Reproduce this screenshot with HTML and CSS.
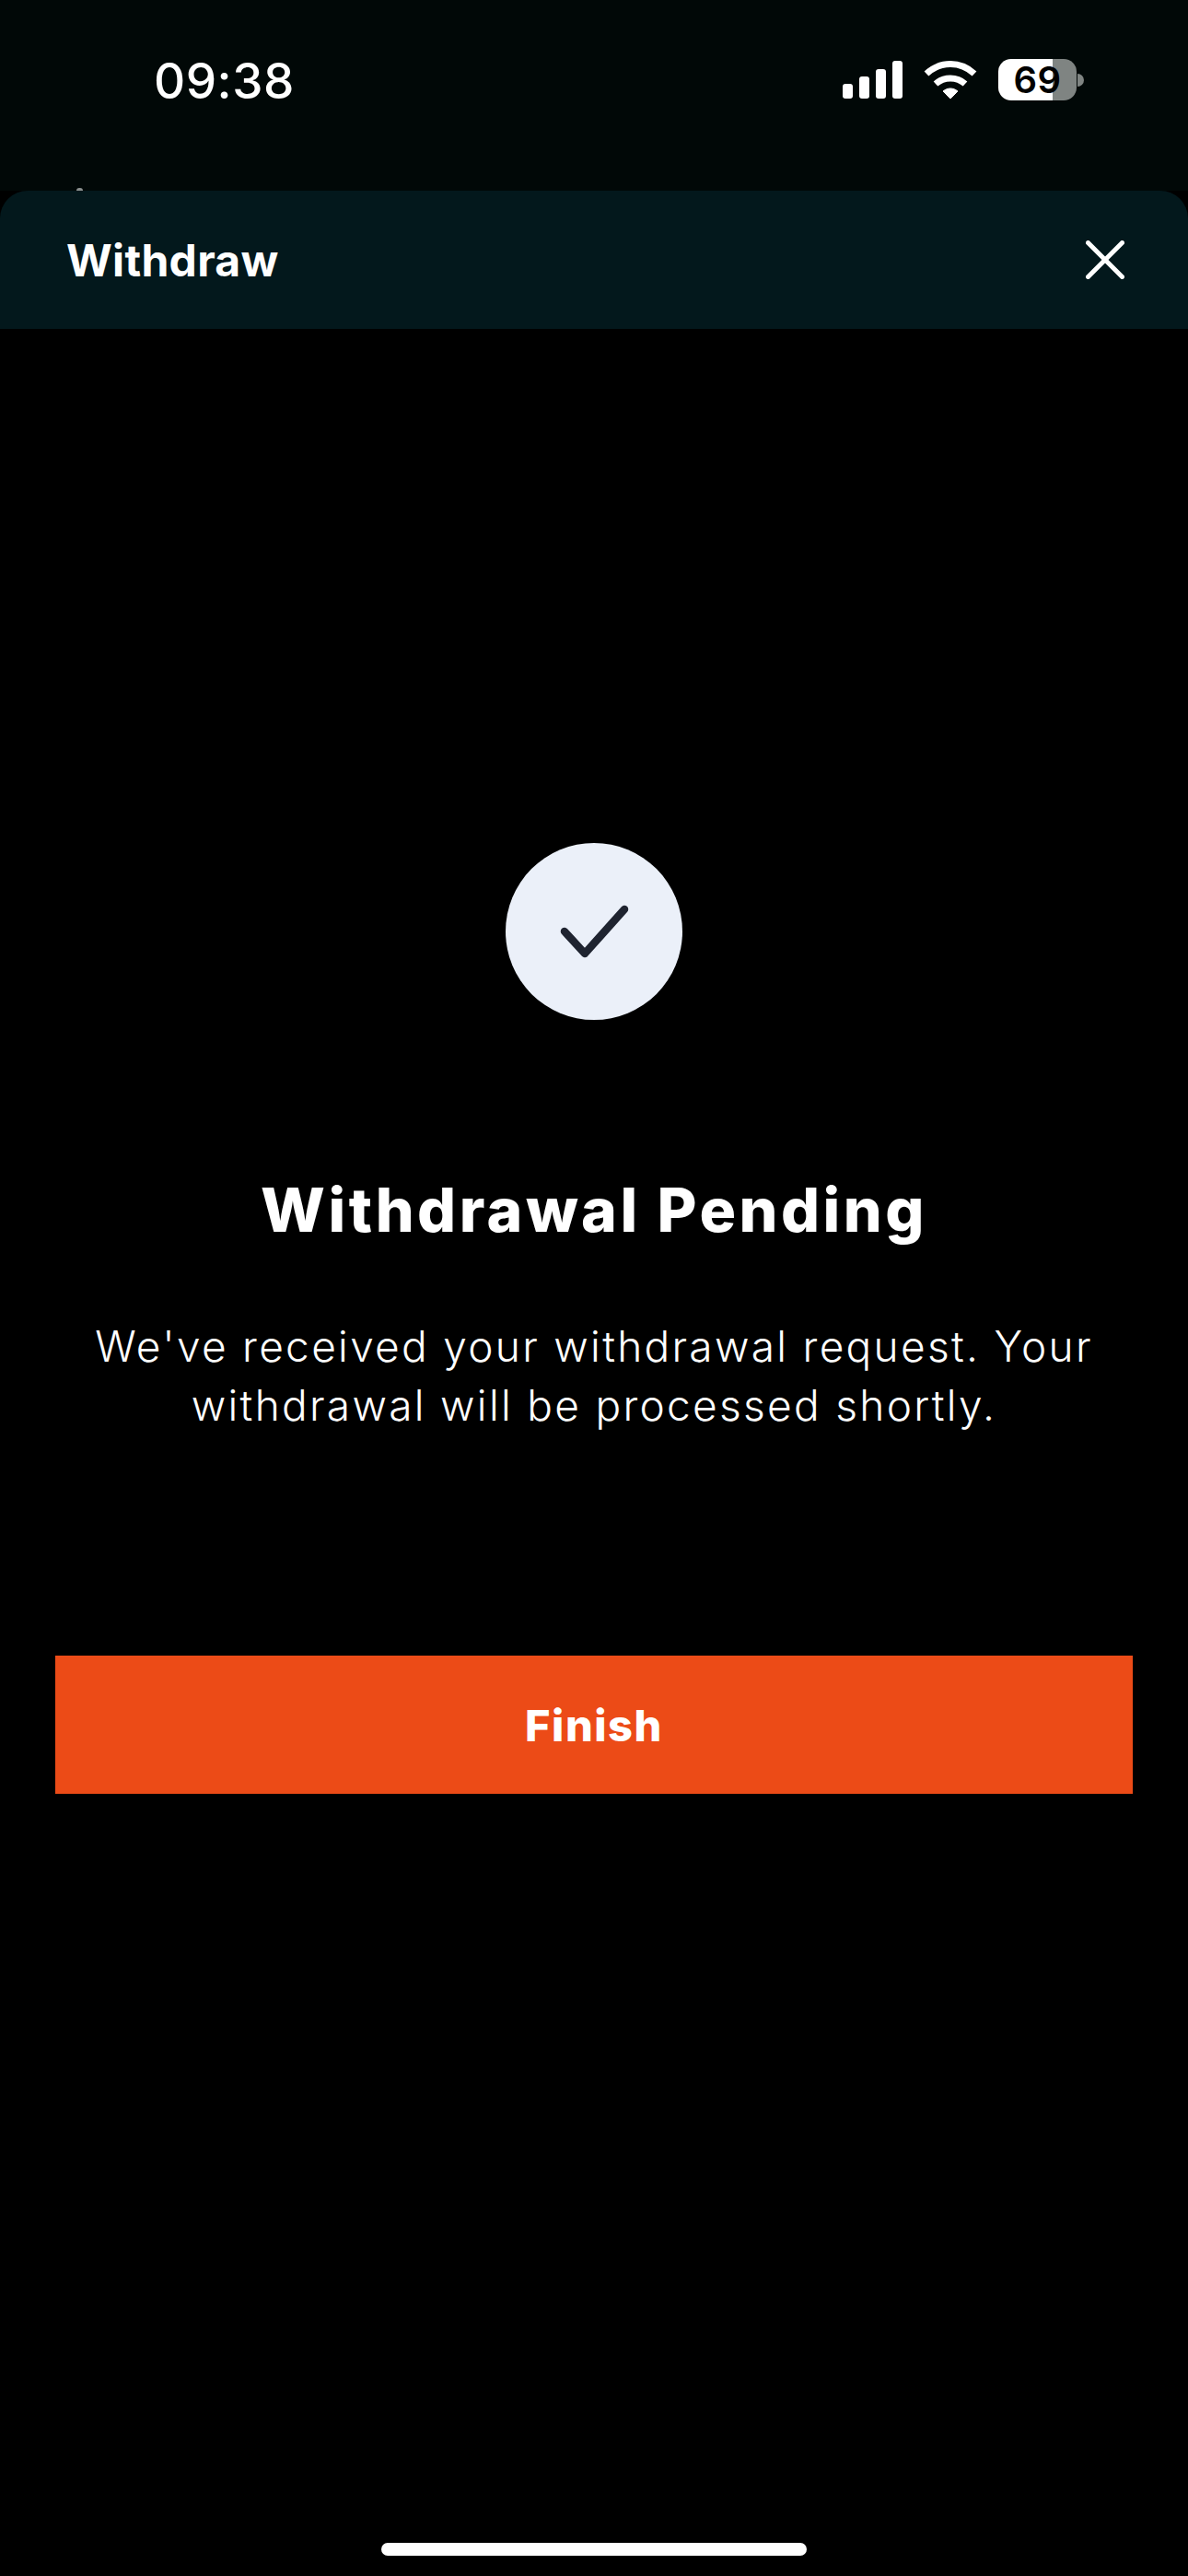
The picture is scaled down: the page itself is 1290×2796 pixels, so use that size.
FILE: index.html
```html
<!DOCTYPE html>
<html lang="en">

<head>
    <meta charset="UTF-8">
    <meta name="viewport" content="width=device-width, initial-scale=1.0">
    <title>Withdraw</title>
    <link rel="stylesheet" href="styles.css">
</head>

<body>
    <div class="status-bar">
        <span class="status-time">09:38</span>
        <div class="status-icons">
            <!-- Signal -->
            <svg class="icon-signal" width="65" height="41" viewBox="0 0 65 41" fill="#fff">
                <rect x="0" y="25" width="11" height="16" rx="3"></rect>
                <rect x="18" y="17" width="11" height="24" rx="3"></rect>
                <rect x="36" y="9" width="11" height="32" rx="3"></rect>
                <rect x="54" y="0" width="11" height="41" rx="3"></rect>
            </svg>
            <!-- Wifi -->
            <svg class="icon-wifi" width="58" height="43" viewBox="0 0 58 43" fill="none" stroke="#fff">
                <path d="M3 15 C18 1 40 1 55 15" stroke-width="7"></path>
                <path d="M13 26 C22 18 36 18 45 26" stroke-width="7"></path>
                <path d="M21 34 C26 30 32 30 37 34 L29 42 Z" fill="#fff" stroke="#fff" stroke-width="1" stroke-linejoin="round"></path>
            </svg>
            <!-- Battery -->
            <div class="battery">
                <div class="battery-body">
                    <span class="battery-level">69</span>
                </div>
                <div class="battery-cap"></div>
            </div>
        </div>
    </div>

    <div class="sheet-header">
        <span class="sheet-peek"></span>
        <h1>Withdraw</h1>
        <svg class="icon-close" width="42" height="42" viewBox="0 0 42 42" fill="none" stroke="#fff" stroke-width="5" stroke-linecap="round">
            <path d="M2.5 2.5 L39.5 39.5"></path>
            <path d="M39.5 2.5 L2.5 39.5"></path>
        </svg>
    </div>

    <main class="result">
        <div class="result-icon">
            <svg width="192" height="192" viewBox="0 0 192 192" fill="none" stroke="#1f2430" stroke-width="8.5" stroke-linecap="round" stroke-linejoin="round">
                <path d="M64 96 L86 120 L129 72"></path>
            </svg>
        </div>
        <h2>Withdrawal Pending</h2>
        <p>We've received your withdrawal request. Your<br>withdrawal will be processed shortly.</p>
        <button class="finish-btn">Finish</button>
    </main>

    <div class="home-indicator"></div>
</body>

</html>
```

FILE: styles.css
```css
* {
    box-sizing: border-box;
}

html,
body {
    margin: 0;
    height: 2796px;
    overflow: hidden;
}

body {
    position: relative;
    background-color: black;
    color: white;
    font-family: "Inter", "Liberation Sans", sans-serif;
}

.status-bar {
    height: 207px;
    background-color: #010807;
    display: flex;
    justify-content: space-between;
    align-items: flex-start;
    padding: 57px 113px 0 167px;
}

.status-time {
    font-size: 53px;
    font-weight: 500;
    line-height: 62px;
    letter-spacing: 0.5px;
}

.status-icons {
    display: flex;
    align-items: flex-start;
    margin-top: 7px;
}

.icon-signal {
    margin-top: 2px;
    margin-right: 23px;
}

.icon-wifi {
    margin-top: 1px;
    margin-right: 23px;
}

.battery {
    display: flex;
    align-items: center;
}

.battery-body {
    width: 85px;
    height: 45px;
    border-radius: 14px;
    background: linear-gradient(to right, white 69%, #7f8482 69%);
    display: flex;
    align-items: center;
    justify-content: center;
}

.battery-level {
    color: black;
    font-size: 40px;
    font-weight: 600;
    line-height: 45px;
    letter-spacing: 0.5px;
}

.battery-cap {
    width: 7px;
    height: 14px;
    margin-left: 1px;
    background-color: #7f8482;
    border-radius: 0 7px 7px 0;
}

.sheet-header {
    position: relative;
    height: 150px;
    background-color: #03181c;
    border-radius: 30px 30px 0 0;
    display: flex;
    justify-content: space-between;
    align-items: center;
    padding: 0 69px 0 72px;
}

.sheet-header h1 {
    margin: 0;
    font-size: 48px;
    font-weight: 700;
    letter-spacing: 0.3px;
}

.sheet-peek {
    position: absolute;
    left: 83px;
    top: -3px;
    width: 7px;
    height: 3px;
    background-color: #8a8f8e;
    border-radius: 3px 3px 0 0;
}

.result {
    display: flex;
    flex-direction: column;
    align-items: center;
    padding-top: 558px;
}

.result-icon {
    width: 192px;
    height: 192px;
    border-radius: 50%;
    background-color: #ebf0f9;
}

.result-icon svg {
    display: block;
}

.result h2 {
    margin: 166px 0 0;
    font-size: 66px;
    font-weight: 800;
    line-height: 80px;
    letter-spacing: 3.5px;
}

.result p {
    margin: 76px 0 0;
    text-align: center;
    font-size: 46px;
    font-weight: 300;
    line-height: 64px;
    letter-spacing: 2.3px;
}

.finish-btn {
    width: 1170px;
    height: 150px;
    margin-top: 240px;
    border: none;
    background-color: #ec4b17;
    color: white;
    font-family: "Inter", sans-serif;
    font-size: 47px;
    font-weight: 800;
    letter-spacing: 1.5px;
}

.home-indicator {
    position: absolute;
    left: 414px;
    top: 2760px;
    width: 462px;
    height: 14px;
    border-radius: 7px;
    background-color: white;
}
```
